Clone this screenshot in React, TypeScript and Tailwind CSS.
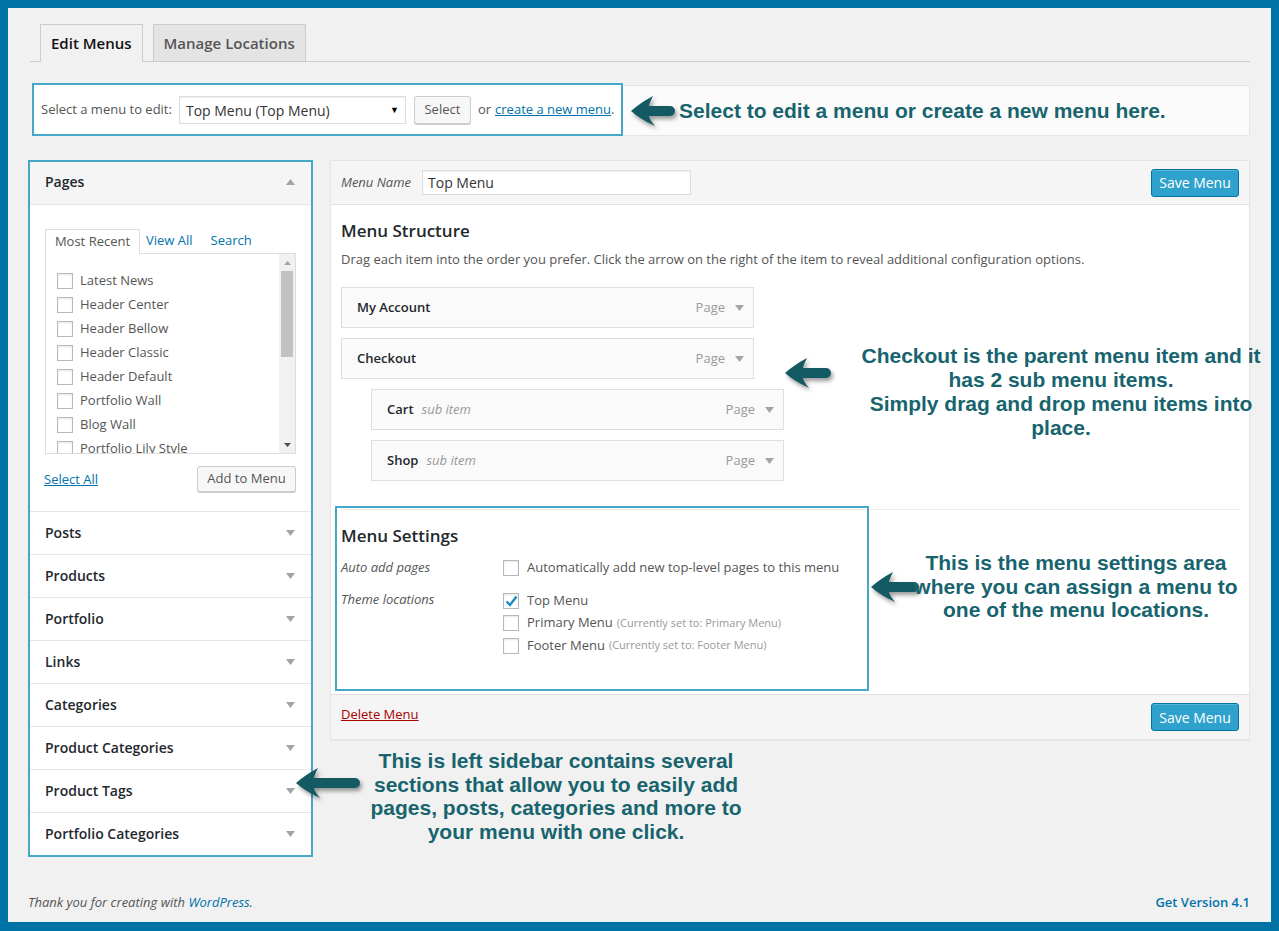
import React from "react";

function Tri({ up = false, color = "#a0a5aa" }: { up?: boolean; color?: string }) {
  return (
    <svg width="9" height="6" viewBox="0 0 9 6" className="block">
      <polygon points={up ? "0,6 9,6 4.5,0" : "0,0 9,0 4.5,6"} fill={color} />
    </svg>
  );
}

function Arrow({ w, h = 32 }: { w: number; h?: number }) {
  const m = h / 2;
  const d = `M1 ${m} Q10 ${m - 8} 23 1 Q19 ${m - 7} 19 ${m - 5} L${w - 6} ${m - 5} A5 5 0 0 1 ${w - 6} ${m + 5} L19 ${m + 5} Q19 ${m + 8} 25 ${h - 1} Q10 ${m + 8} 1 ${m} Z`;
  return (
    <svg width={w} height={h} viewBox={`0 0 ${w} ${h}`} className="block drop-shadow-[2px_3px_2px_rgba(0,0,0,0.4)]">
      <path d={d} fill="#145a62" />
    </svg>
  );
}

function Checkbox({ checked = false }: { checked?: boolean }) {
  return (
    <span className="flex h-[16px] w-[16px] shrink-0 items-center justify-center border border-[#b4b9be] bg-white shadow-[inset_0_1px_2px_rgba(0,0,0,0.1)]">
      {checked && (
        <svg width="13" height="12" viewBox="0 0 13 12">
          <path d="M1.5 6.5 L5 10 L11.5 1.5" stroke="#1e8cbe" strokeWidth="2.4" fill="none" />
        </svg>
      )}
    </span>
  );
}

function MenuItem({ title, sub = false }: { title: string; sub?: boolean }) {
  return (
    <div
      className={`flex h-[41px] w-[413px] items-center border border-[#dfdfdf] bg-[#fafafa] pl-[15px] pr-[9px] ${
        sub ? "ml-[30px]" : ""
      }`}
    >
      <span className="text-[13px] font-semibold text-[#23282d]">{title}</span>
      {sub && <span className="ml-[8px] text-[13px] italic text-[#999]">sub item</span>}
      <span className="ml-auto text-[13px] text-[#999]">Page</span>
      <span className="ml-[10px]">
        <Tri />
      </span>
    </div>
  );
}

const pages = [
  "Latest News",
  "Header Center",
  "Header Bellow",
  "Header Classic",
  "Header Default",
  "Portfolio Wall",
  "Blog Wall",
  "Portfolio Lily Style",
];

const sections = [
  "Posts",
  "Products",
  "Portfolio",
  "Links",
  "Categories",
  "Product Categories",
  "Product Tags",
  "Portfolio Categories",
];

export default function App() {
  return (
    <div
      className="relative h-[931px] w-[1279px] bg-[#0073a6] pb-[9px] pl-[8px] pr-[8px] pt-[8px]"
      style={{ fontFamily: '"Open Sans", "Noto Sans", sans-serif' }}
    >
      <div className="flex h-full flex-col bg-[#f1f1f1] pl-[20px] pr-[21px] pt-[16px]">
        {/* Tabs */}
        <div className="ml-[2px] flex h-[38px] items-end border-b border-[#cccccc] pl-[10px]">
          <div className="-mb-px flex h-[38px] items-center border border-b-0 border-[#cccccc] bg-[#f1f1f1] px-[10px] text-[15px] font-semibold text-[#111]">
            Edit Menus
          </div>
          <div className="ml-[10px] flex h-[37px] items-center border border-b-0 border-[#cccccc] bg-[#e4e4e4] px-[10px] text-[15px] font-semibold text-[#555]">
            Manage Locations
          </div>
        </div>

        {/* Select bar */}
        <div className="ml-[4px] mt-[21px] flex h-[53px] items-end">
          <div className="flex h-[53px] w-[591px] items-center border-2 border-[#46a8c8] bg-white pl-[7px] pt-px text-[13px] text-[#555]">
            <span>Select a menu to edit:</span>
            <div className="ml-[7px] flex h-[28px] w-[227px] items-center border border-[#dddddd] bg-white pl-[6px] pr-[6px] text-[14px] text-[#333] shadow-[inset_0_1px_2px_rgba(0,0,0,0.07)]">
              <span>Top Menu (Top Menu)</span>
              <span className="ml-auto text-[9px] text-black">▼</span>
            </div>
            <div className="ml-[8px] flex h-[28px] w-[57px] items-center justify-center rounded-[3px] border border-[#cccccc] bg-[#f7f7f7] text-[13px] text-[#555] shadow-[0_1px_0_#ccc]">
              Select
            </div>
            <span className="ml-[7px]">or</span>
            <span className="ml-[4px] text-[#0073aa] underline">create a new menu</span>
            <span>.</span>
          </div>
          <div className="flex h-[51px] flex-1 items-center border-y border-r border-[#e5e5e5] bg-[#fbfbfb] pl-[7px]">
            <Arrow w={46} />
            <span
              className="ml-[3px] text-[21px] font-bold leading-[26px] text-[#17646e]"
              style={{ fontFamily: '"Liberation Sans", Arial, sans-serif' }}
            >
              Select to edit a menu or create a new menu here.
            </span>
          </div>
        </div>

        {/* Main row */}
        <div className="mt-[24px] flex items-start gap-[17px]">
          {/* Sidebar */}
          <div className="w-[285px] border-2 border-[#46a8c8] bg-white">
            <div className="flex h-[43px] items-center border-b border-[#e5e5e5] bg-[#f5f5f5] pb-[3px] pl-[15px] pr-[16px]">
              <span className="text-[14px] font-semibold text-[#23282d]">Pages</span>
              <span className="ml-auto">
                <Tri up />
              </span>
            </div>
            <div className="h-[306px] pl-[15px] pr-[15px] pt-[24px]">
              <div className="flex h-[24px] items-end text-[13px]">
                <div className="relative z-10 -mb-px flex h-[25px] w-[95px] items-center justify-center border border-b-0 border-[#dddddd] bg-white text-[#555]">
                  Most Recent
                </div>
                <span className="ml-[6px] self-center text-[#0073aa]">View All</span>
                <span className="ml-[18px] self-center text-[#0073aa]">Search</span>
              </div>
              <div className="flex h-[201px] w-[251px] border border-[#dddddd] bg-white">
                <div className="flex-1 overflow-hidden pl-[11px] pt-[15px]">
                  {pages.map((p) => (
                    <div key={p} className="flex h-[24px] items-center gap-[7px] text-[13px] text-[#555]">
                      <Checkbox />
                      <span>{p}</span>
                    </div>
                  ))}
                </div>
                <div className="flex w-[16px] flex-col items-center bg-[#f1f1f1]">
                  <div className="flex h-[17px] items-center">
                    <svg width="7" height="4" viewBox="0 0 7 4">
                      <polygon points="0,4 7,4 3.5,0" fill="#a3a3a3" />
                    </svg>
                  </div>
                  <div className="h-[86px] w-[12px] bg-[#c1c1c1]" />
                  <div className="flex-1" />
                  <div className="flex h-[17px] items-center">
                    <svg width="7" height="4" viewBox="0 0 7 4">
                      <polygon points="0,0 7,0 3.5,4" fill="#505050" />
                    </svg>
                  </div>
                </div>
              </div>
              <div className="mt-[12px] flex h-[26px] items-center">
                <span className="-ml-px pt-px text-[13px] text-[#0073aa] underline">Select All</span>
                <div className="ml-auto flex h-[26px] w-[99px] items-center justify-center rounded-[3px] border border-[#cccccc] bg-[#f7f7f7] text-[13px] text-[#555] shadow-[0_1px_0_#ccc]">
                  Add to Menu
                </div>
              </div>
            </div>
            {sections.map((s) => (
              <div key={s} className="flex h-[43px] items-center border-t border-[#e5e5e5] pb-px pl-[15px] pr-[16px]">
                <span className="text-[14px] font-semibold text-[#23282d]">{s}</span>
                <span className="ml-auto">
                  <Tri />
                </span>
              </div>
            ))}
          </div>

          {/* Main panel */}
          <div className="w-[920px] border border-[#e5e5e5] bg-white shadow-[0_1px_1px_rgba(0,0,0,0.04)]">
            <div className="flex h-[44px] items-center border-b border-[#dfdfdf] bg-[#f5f5f5] px-[10px]">
              <span className="w-[81px] text-[13px] italic text-[#555]">Menu Name</span>
              <div className="flex h-[25px] w-[269px] items-center border border-[#dddddd] bg-white pl-[5px] text-[14px] text-[#333] shadow-[inset_0_1px_2px_rgba(0,0,0,0.07)]">
                Top Menu
              </div>
              <div className="ml-auto flex h-[28px] w-[88px] items-center justify-center rounded-[3px] border border-[#0074a2] bg-[#2ea2cc] text-[14px] text-white shadow-[inset_0_1px_0_rgba(120,200,230,0.5)]">
                Save Menu
              </div>
            </div>
            <div className="px-[10px] pb-[3px] pt-[14px]">
              <div className="text-[17px] font-semibold leading-[24px] text-[#23282d]">Menu Structure</div>
              <div className="mt-[6px] text-[13px] leading-[20px] text-[#555]">
                Drag each item into the order you prefer. Click the arrow on the right of the item to reveal additional configuration options.
              </div>
              <div className="mt-[18px] flex flex-col gap-[10px]">
                <MenuItem title="My Account" />
                <MenuItem title="Checkout" />
                <MenuItem title="Cart" sub />
                <MenuItem title="Shop" sub />
              </div>
              <div className="mr-[-1px] mt-[28px] border-t border-[#eeeeee]">
                <div className="-ml-[6px] -mt-[4px] h-[185px] w-[534px] border-2 border-[#46a8c8] pl-[4px] pt-[16px]">
                  <div className="text-[17px] font-semibold leading-[24px] text-[#23282d]">Menu Settings</div>
                  <div className="mt-[10px] flex h-[20px] items-center text-[13px]">
                    <span className="w-[162px] italic text-[#555]">Auto add pages</span>
                    <Checkbox />
                    <span className="ml-[8px] text-[#555]">Automatically add new top-level pages to this menu</span>
                  </div>
                  <div className="mt-[11px] flex text-[13px]">
                    <span className="w-[162px] italic leading-[20px] text-[#555]">Theme locations</span>
                    <div className="flex flex-col pt-px">
                      <div className="flex h-[22px] items-center">
                        <Checkbox checked />
                        <span className="ml-[8px] text-[#555]">Top Menu</span>
                      </div>
                      <div className="flex h-[22px] items-center">
                        <Checkbox />
                        <span className="ml-[8px] text-[#555]">Primary Menu</span>
                        <span className="ml-[4px] text-[11px] text-[#999]">(Currently set to: Primary Menu)</span>
                      </div>
                      <div className="flex h-[23px] items-center">
                        <Checkbox />
                        <span className="ml-[8px] text-[#555]">Footer Menu</span>
                        <span className="ml-[4px] text-[11px] text-[#999]">(Currently set to: Footer Menu)</span>
                      </div>
                    </div>
                  </div>
                </div>
              </div>
            </div>
            <div className="flex h-[45px] items-center border-t border-[#dfdfdf] bg-[#f5f5f5] px-[10px]">
              <span className="-mt-[5px] text-[13px] text-[#a00] underline">Delete Menu</span>
              <div className="ml-auto flex h-[28px] w-[88px] items-center justify-center rounded-[3px] border border-[#0074a2] bg-[#2ea2cc] text-[14px] text-white shadow-[inset_0_1px_0_rgba(120,200,230,0.5)]">
                Save Menu
              </div>
            </div>
          </div>
        </div>

        <div className="flex-1" />
        {/* Footer */}
        <div className="flex h-[20px] items-center justify-between pt-px text-[13px]">
          <span className="italic text-[#555]">
            Thank you for creating with <span className="text-[#0073aa]">WordPress</span>.
          </span>
          <span className="font-semibold text-[#0073aa]">Get Version 4.1</span>
        </div>
        <div className="h-[10px]" />
      </div>

      {/* Annotation callouts overlaying the screen */}
      <div className="absolute left-[784px] top-[357px]">
        <Arrow w={48} />
      </div>
      <div
        className="absolute left-[821px] top-[344px] w-[480px] text-center text-[21px] font-bold leading-[24px] text-[#17646e]"
        style={{ fontFamily: '"Liberation Sans", Arial, sans-serif' }}
      >
        <div>Checkout is the parent menu item and it</div>
        <div>has 2 sub menu items.</div>
        <div>Simply drag and drop menu items into</div>
        <div>place.</div>
      </div>

      <div className="absolute left-[870px] top-[571px]">
        <Arrow w={50} />
      </div>
      <div
        className="absolute left-[896px] top-[551px] w-[360px] text-center text-[21px] font-bold leading-[23.5px] text-[#17646e]"
        style={{ fontFamily: '"Liberation Sans", Arial, sans-serif' }}
      >
        <div>This is the menu settings area</div>
        <div>where you can assign a menu to</div>
        <div>one of the menu locations.</div>
      </div>

      <div className="absolute left-[295px] top-[767px]">
        <Arrow w={66} h={32} />
      </div>
      <div
        className="absolute left-[336px] top-[749px] w-[440px] text-center text-[21px] font-bold leading-[23.7px] text-[#17646e]"
        style={{ fontFamily: '"Liberation Sans", Arial, sans-serif' }}
      >
        <div>This is left sidebar contains several</div>
        <div>sections that allow you to easily add</div>
        <div>pages, posts, categories and more to</div>
        <div>your menu with one click.</div>
      </div>
    </div>
  );
}
